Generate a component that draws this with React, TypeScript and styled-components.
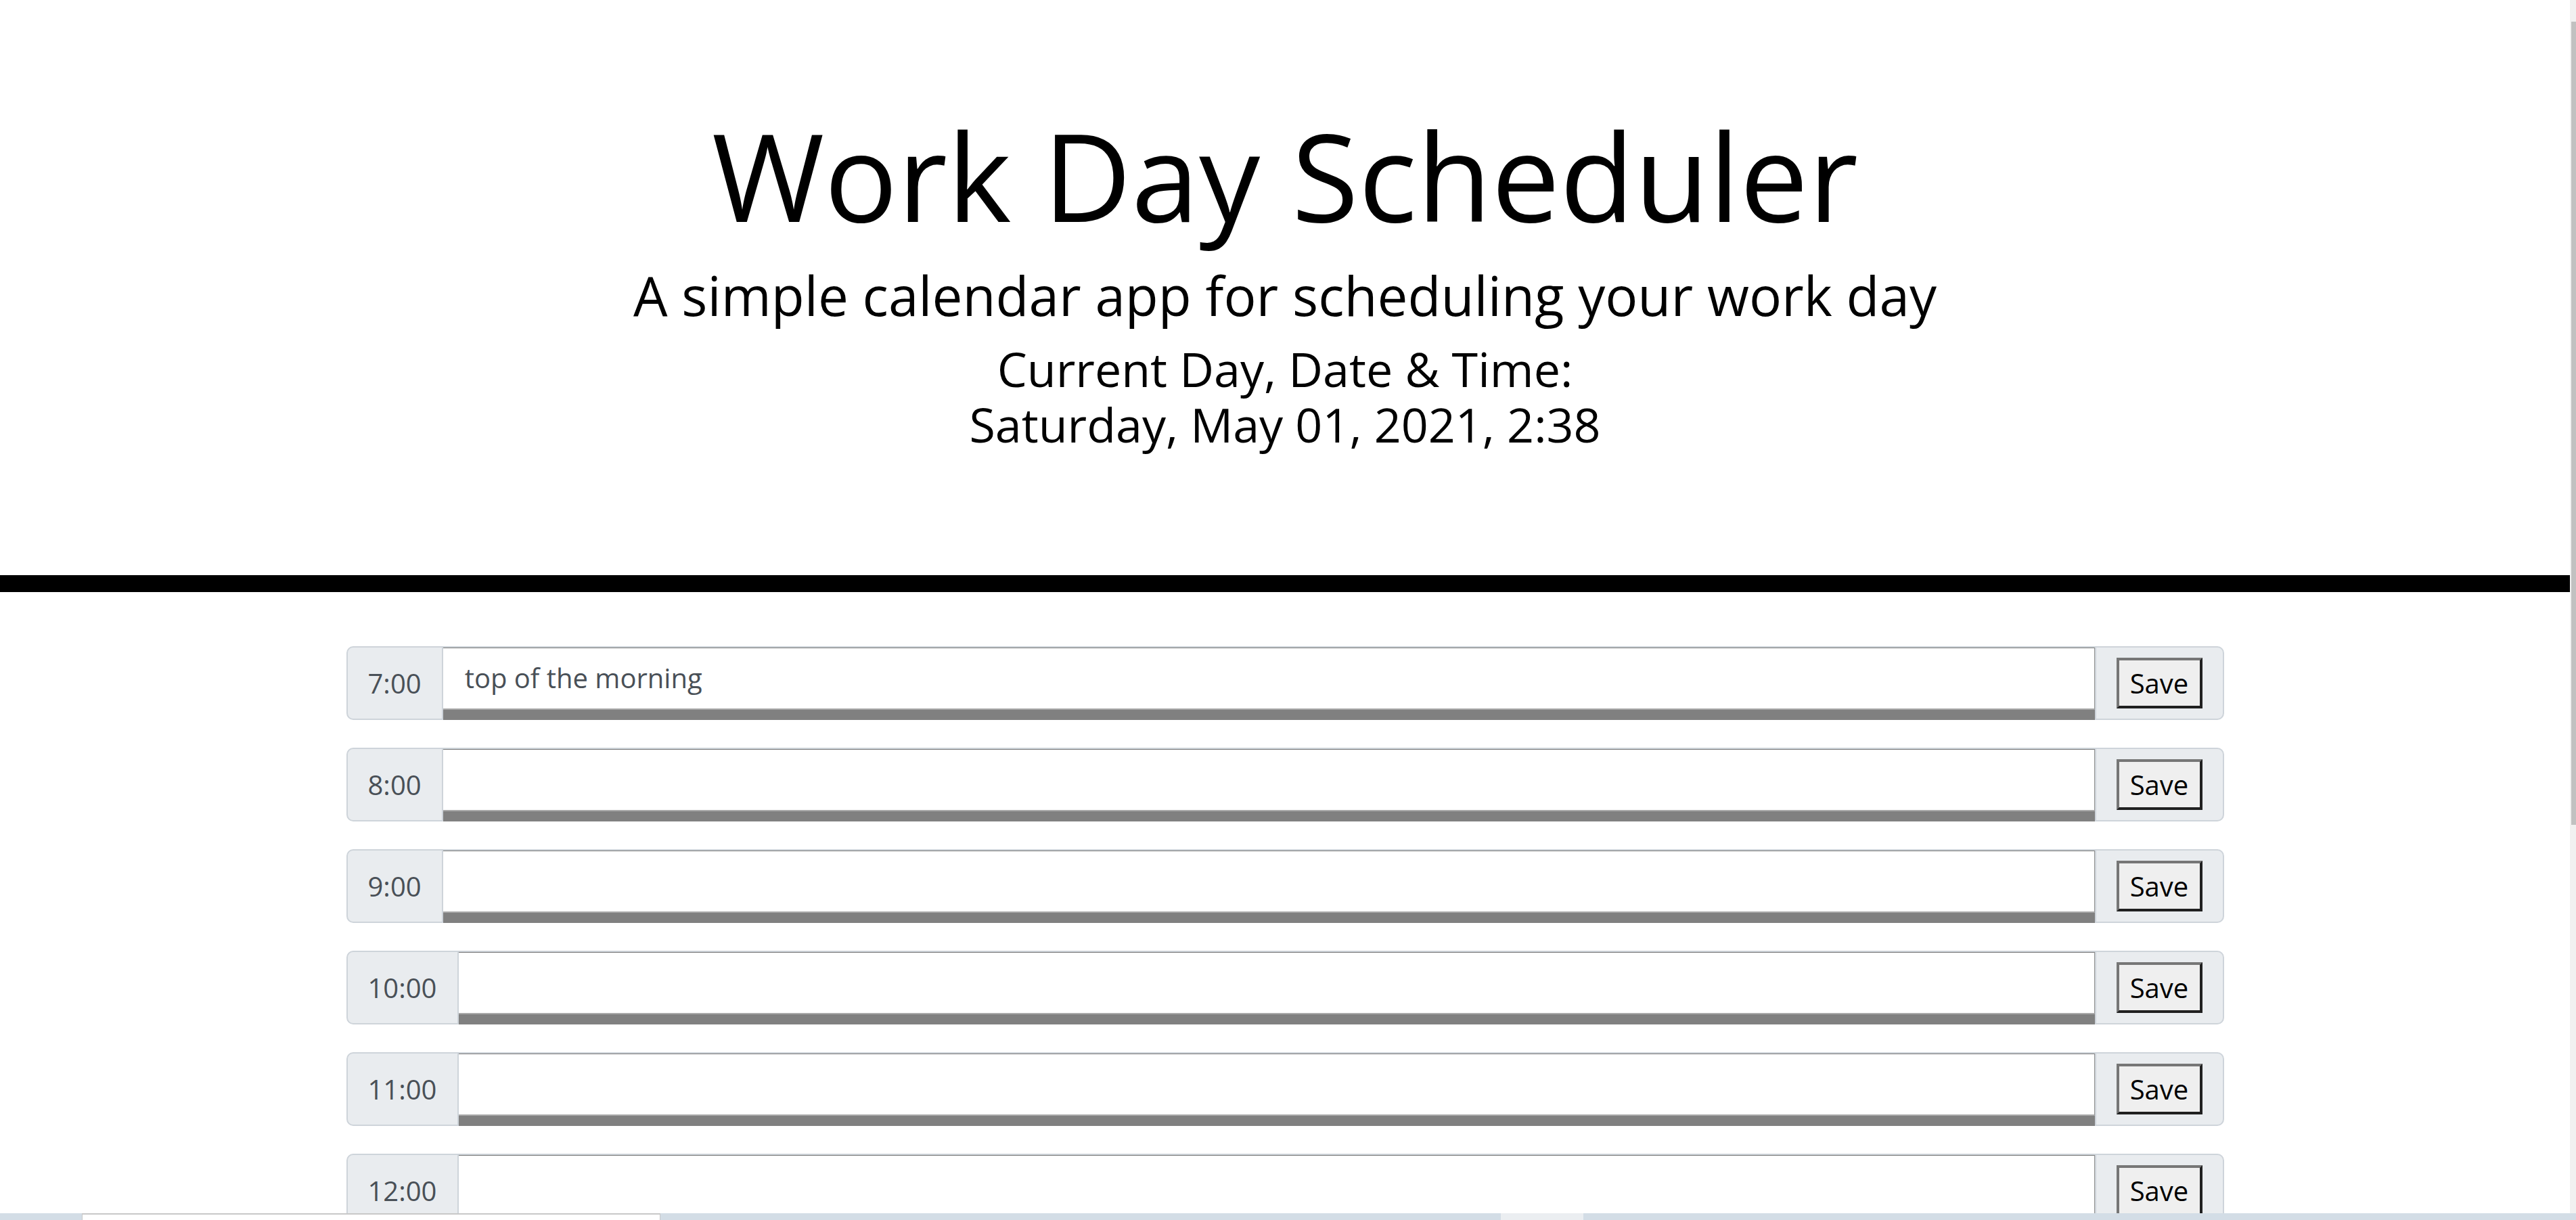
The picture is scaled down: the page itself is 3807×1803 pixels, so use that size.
import React from "react";
import styled, { createGlobalStyle } from "styled-components";

const GlobalStyle = createGlobalStyle`
  html, body {
    margin: 0;
    padding: 0;
    height: 100%;
    overflow: hidden;
    background: #ffffff;
    font-family: "Open Sans", "Liberation Sans", sans-serif;
  }
  #root { height: 100%; }
  * { box-sizing: border-box; }
`;

const Viewport = styled.div`
  display: flex;
  flex-direction: column;
  height: 100vh;
`;

const Screen = styled.div`
  display: flex;
  flex: 1;
  min-height: 0;
`;

const Page = styled.main`
  flex: 1;
  min-width: 0;
  overflow: hidden;
`;

const Header = styled.header`
  text-align: center;
  color: #000000;
  padding: 151px 0 182px;
  border-bottom: 25px solid #000000;
`;

const Title = styled.h1`
  margin: 0;
  font-size: 180px;
  font-weight: 400;
  line-height: 1.2;
`;

const Lead = styled.p`
  margin: 29px 0 0;
  font-size: 80px;
  font-weight: 400;
  line-height: 1;
`;

const CurrentDay = styled.p`
  margin: 28px 0 0;
  font-size: 70px;
  font-weight: 400;
  line-height: 82px;
`;

const Container = styled.section`
  width: 2775px;
  margin: 80px auto 0;
  display: flex;
  flex-direction: column;
  gap: 41px;
`;

const Row = styled.div`
  display: flex;
  height: 109px;
`;

const Hour = styled.span`
  display: flex;
  align-items: center;
  padding: 0 30px;
  background: #e9ecef;
  border: 2px solid #ced4da;
  border-radius: 10px 0 0 10px;
  color: #495057;
  font-size: 40px;
  font-weight: 400;
`;

const Description = styled.div`
  flex: 1;
  display: flex;
  flex-direction: column;
  border-top: 2px solid #ced4da;
`;

const Field = styled.textarea`
  flex: 1;
  resize: none;
  margin: 0;
  background: #ffffff;
  border: none;
  border-top: 1px solid #767676;
  border-right: 1px solid #8f8f8f;
  border-bottom: 2px solid #a9a9a9;
  padding: 14px 30px 0 32px;
  font-family: "Open Sans", "Liberation Sans", sans-serif;
  font-size: 40px;
  line-height: 1.5;
  color: #495057;
  outline: none;
  overflow: hidden;
`;

const Bar = styled.div`
  height: 15px;
  background: #808080;
`;

const Append = styled.div`
  display: flex;
  align-items: center;
  padding: 0 30px;
  background: #e9ecef;
  border: 2px solid #ced4da;
  border-radius: 0 10px 10px 0;
`;

const SaveButton = styled.button`
  width: 127px;
  height: 75px;
  padding: 0;
  background: #efefef;
  border-style: solid;
  border-width: 4px;
  border-color: #767676 #202020 #202020 #767676;
  font-family: "Open Sans", "Liberation Sans", sans-serif;
  font-size: 40px;
  line-height: 1;
  color: #000000;
`;

const Scrollbar = styled.div`
  width: 9px;
  background: #f1f1f1;
  padding: 32px 0 0 2px;
`;

const Thumb = styled.div`
  height: 1187px;
  background: #c1c1c1;
`;

const Taskbar = styled.footer`
  height: 10px;
  display: flex;
  background: #d3dde6;
`;

const TaskGap = styled.div<{ $w?: number }>`
  flex: ${(p) => (p.$w ? `0 0 ${p.$w}px` : "1")};
`;

const TaskTab = styled.div`
  flex: 0 0 855px;
  background: #ffffff;
  border-top: 2px solid #c8c8c8;
  border-left: 1px solid #c8c8c8;
  border-right: 1px solid #c8c8c8;
`;

const TaskPatch = styled.div`
  flex: 0 0 122px;
  background: #ebeef1;
`;

const hours = [
  { label: "7:00", text: "top of the morning" },
  { label: "8:00", text: "" },
  { label: "9:00", text: "" },
  { label: "10:00", text: "" },
  { label: "11:00", text: "" },
  { label: "12:00", text: "" },
  { label: "13:00", text: "" },
  { label: "14:00", text: "" },
  { label: "15:00", text: "" },
  { label: "16:00", text: "" },
  { label: "17:00", text: "" },
];

export default function App() {
  return (
    <>
      <GlobalStyle />
      <Viewport>
        <Screen>
          <Page>
            <Header>
              <Title>Work Day Scheduler</Title>
              <Lead>A simple calendar app for scheduling your work day</Lead>
              <CurrentDay>
                Current Day, Date &amp; Time:
                <br />
                Saturday, May 01, 2021, 2:38
              </CurrentDay>
            </Header>
            <Container>
              {hours.map((h) => (
                <Row key={h.label}>
                  <Hour>{h.label}</Hour>
                  <Description>
                    <Field defaultValue={h.text} />
                    <Bar />
                  </Description>
                  <Append>
                    <SaveButton>Save</SaveButton>
                  </Append>
                </Row>
              ))}
            </Container>
          </Page>
          <Scrollbar>
            <Thumb />
          </Scrollbar>
        </Screen>
        <Taskbar>
          <TaskGap $w={121} />
          <TaskTab />
          <TaskGap $w={1242} />
          <TaskPatch />
          <TaskGap />
        </Taskbar>
      </Viewport>
    </>
  );
}
